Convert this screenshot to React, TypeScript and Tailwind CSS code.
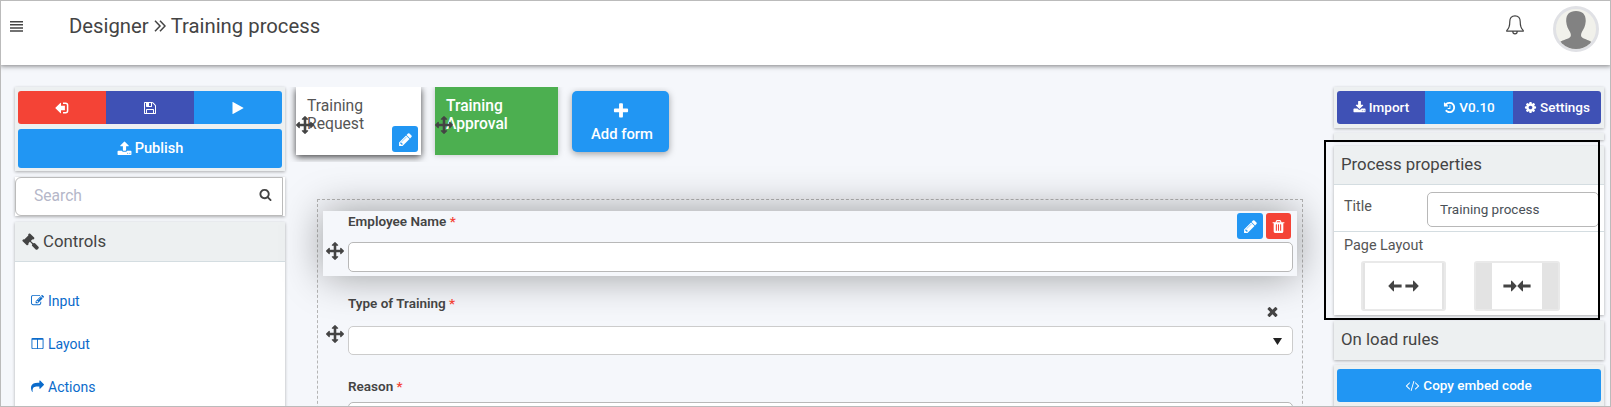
import React from "react";

const P = {
  move: "M1792 896q0 26-19 45l-256 256q-19 19-45 19t-45-19-19-45v-128h-384v384h128q26 0 45 19t19 45-19 45l-256 256q-19 19-45 19t-45-19l-256-256q-19-19-19-45t19-45 45-19h128v-384h-384v128q0 26-19 45t-45 19-45-19l-256-256q-19-19-19-45t19-45l256-256q19-19 45-19t45 19 19 45v128h384v-384h-128q-26 0-45-19t-19-45 19-45l256-256q19-19 45-19t45 19l256 256q19 19 19 45t-19 45-45 19h-128v384h384v-128q0-26 19-45t45-19 45 19l256 256q19 19 19 45z",
  search: "M1216 832q0-185-131.500-316.500t-316.500-131.500-316.500 131.500-131.500 316.500 131.500 316.500 316.500 131.500 316.500-131.500 131.500-316.500zm512 832q0 52-38 90t-90 38q-54 0-90-38l-343-342q-179 124-399 124-143 0-273.500-55.500t-225-150-150-225-55.500-273.500 55.500-273.500 150-225 225-150 273.500-55.500 273.500 55.500 225 150 150 225 55.500 273.500q0 220-124 399l343 343q37 37 37 90z",
  pencil: "M491 1536l91-91-235-235-91 91v107h128v128h107zm523-928q0-22-22-22-10 0-17 7l-542 542q-7 7-7 17 0 22 22 22 10 0 17-7l542-542q7-7 7-17zm-54-192l416 416-832 832h-416v-416zm683 96q0 53-37 90l-166 166-416-416 166-165q36-38 90-38 53 0 91 38l235 234q37 39 37 91z",
  edit: "M888 1184l116-116-152-152-116 116v56h96v96h56zm440-720q-16-16-33 1l-350 350q-17 17-1 33t33-1l350-350q17-17 1-33zm80 594v190q0 119-84.500 203.500t-203.500 84.500h-832q-119 0-203.500-84.500t-84.500-203.500v-832q0-119 84.500-203.500t203.500-84.500h832q63 0 117 25 15 7 18 23 3 17-9 29l-49 49q-14 14-32 8-23-6-45-6h-832q-66 0-113 47t-47 113v832q0 66 47 113t113 47h832q66 0 113-47t47-113v-126q0-13 9-22l64-64q15-15 35-7t20 29zm-96-738l288 288-672 672h-288v-288zm444 132l-92 92-288-288 92-92q28-28 68-28t68 28l152 152q28 28 28 68t-28 68z",
  trash: "M704 1376v-704q0-14-9-23t-23-9h-64q-14 0-23 9t-9 23v704q0 14 9 23t23 9h64q14 0 23-9t9-23zm256 0v-704q0-14-9-23t-23-9h-64q-14 0-23 9t-9 23v704q0 14 9 23t23 9h64q14 0 23-9t9-23zm256 0v-704q0-14-9-23t-23-9h-64q-14 0-23 9t-9 23v704q0 14 9 23t23 9h64q14 0 23-9t9-23zm-544-992h448l-48-117q-7-9-17-11h-317q-10 2-17 11zm928 32v64q0 14-9 23t-23 9h-96v948q0 83-47 143.500t-113 60.500h-832q-66 0-113-58.500t-47-141.500v-952h-96q-14 0-23-9t-9-23v-64q0-14 9-23t23-9h309l70-167q15-37 54-63t79-26h320q40 0 79 26t54 63l70 167h309q14 0 23 9t9 23z",
  times: "M1490 1322q0 40-28 68l-136 136q-28 28-68 28t-68-28l-294-294-294 294q-28 28-68 28t-68-28l-136-136q-28-28-28-68t28-68l294-294-294-294q-28-28-28-68t28-68l136-136q28-28 68-28t68 28l294 294 294-294q28-28 68-28t68 28l136 136q28 28 28 68t-28 68l-294 294 294 294q28 28 28 68z",
  plus: "M1600 736v192q0 40-28 68t-68 28h-416v416q0 40-28 68t-68 28h-192q-40 0-68-28t-28-68v-416h-416q-40 0-68-28t-28-68v-192q0-40 28-68t68-28h416v-416q0-40 28-68t68-28h192q40 0 68 28t28 68v416h416q40 0 68 28t28 68z",
  share: "M1792 640q0 26-19 45l-512 512q-19 19-45 19t-45-19-19-45v-256h-224q-98 0-175.500 6t-154 21.500-133 42.500-105.500 69.500-80 101-48.500 138.500-17.500 181q0 55 5 123 0 6 2.500 23.500t2.500 26.500q0 15-8.500 25t-23.500 10q-16 0-28-17-7-9-13-22t-13.500-30-10.500-24q-127-285-127-451 0-199 53-333 162-403 875-403h224v-256q0-26 19-45t45-19 45 19l512 512q19 19 19 45z",
  code: "M553 1399l-50 50q-10 10-23 10t-23-10l-466-466q-10-10-10-23t10-23l466-466q10-10 23-10t23 10l50 50q10 10 10 23t-10 23l-393 393 393 393q10 10 10 23t-10 23zm591-1067l-373 1291q-4 13-15.500 19.500t-23.500 2.500l-62-17q-13-4-19.500-15.500t-2.500-24.500l373-1291q4-13 15.500-19.500t23.500-2.500l62 17q13 4 19.500 15.500t2.500 24.500zm657 651l-466 466q-10 10-23 10t-23-10l-50-50q-10-10-10-23t10-23l393-393-393-393q-10-10-10-23t10-23l50-50q10-10 23-10t23 10l466 466q10 10 10 23t-10 23z",
  cog: "M1152 896q0-106-75-181t-181-75-181 75-75 181 75 181 181 75 181-75 75-181zm512-109v222q0 12-8 23t-20 13l-185 28q-19 54-39 91 35 50 107 138 10 12 10 25t-9 23q-27 37-99 108t-94 71q-12 0-26-9l-138-108q-44 23-91 38-16 136-29 186-7 28-36 28h-222q-14 0-24.500-8.500t-11.500-21.500l-28-184q-49-16-90-37l-141 107q-10 9-25 9-14 0-25-11-126-114-165-168-7-10-7-23 0-12 8-23 15-21 51-66.500t54-70.500q-27-50-41-99l-183-27q-13-2-21-12.500t-8-23.500v-222q0-12 8-23t19-13l186-28q14-46 39-92-40-57-107-138-10-12-10-24 0-10 9-23 26-36 98.500-107.500t94.500-71.500q13 0 26 10l138 107q44-23 91-38 16-136 29-186 7-28 36-28h222q14 0 24.500 8.500t11.500 21.500l28 184q49 16 90 37l142-107q9-9 24-9 13 0 25 10 129 119 165 170 7 8 7 22 0 12-8 23-15 21-51 66.500t-54 70.500q26 50 41 98l183 28q13 2 21 12.500t8 23.500z",
  history: "M1664 896q0 156-61 298t-164 245-245 164-298 61q-172 0-327-72.500t-264-204.500q-7-10-6.500-22.500t8.500-20.500l137-138q10-9 25-9 16 2 23 12 73 95 179 147t225 52q104 0 198.500-40.500t163.500-109.500 109.500-163.500 40.500-198.500-40.500-198.500-109.500-163.500-163.500-109.500-198.500-40.500q-98 0-188 35.500t-160 101.500l137 138q31 30 14 69-17 40-59 40h-448q-26 0-45-19t-19-45v-448q0-42 40-59 39-17 69 14l130 129q107-101 244.500-156.500t284.500-55.500q156 0 298 61t245 164 164 245 61 298zm-640-288v448q0 14-9 23t-23 9h-320q-14 0-23-9t-9-23v-64q0-14 9-23t23-9h224v-352q0-14 9-23t23-9h64q14 0 23 9t9 23z",
  upload: "M1344 1472q0-26-19-45t-45-19-45 19-19 45 19 45 45 19 45-19 19-45zm256 0q0-26-19-45t-45-19-45 19-19 45 19 45 45 19 45-19 19-45zm128-224v320q0 40-28 68t-68 28h-1472q-40 0-68-28t-28-68v-320q0-40 28-68t68-28h427q21 56 70.500 92t110.500 36h256q61 0 110.500-36t70.500-92h427q40 0 68 28t28 68zm-325-648q-17 40-59 40h-256v448q0 26-19 45t-45 19h-256q-26 0-45-19t-19-45v-448h-256q-42 0-59-40-17-39 14-69l448-448q18-19 45-19t45 19l448 448q31 30 14 69z",
  download: "M1344 1344q0-26-19-45t-45-19-45 19-19 45 19 45 45 19 45-19 19-45zm256 0q0-26-19-45t-45-19-45 19-19 45 19 45 45 19 45-19 19-45zm128-224v320q0 40-28 68t-68 28h-1472q-40 0-68-28t-28-68v-320q0-40 28-68t68-28h465l135 136q58 56 136 56t136-56l136-136h464q40 0 68 28t28 68zm-325-569q17 41-14 70l-448 448q-18 19-45 19t-45-19l-448-448q-31-29-14-70 17-39 59-39h256v-448q0-26 19-45t45-19h256q26 0 45 19t19 45v448h256q42 0 59 39z",
  save: "M512 1536h768v-384h-768v384zm896 0h128v-896q0-14-10-38.500t-20-34.500l-281-281q-10-10-34-20t-39-10v416q0 40-28 68t-68 28h-576q-40 0-68-28t-28-68v-416h-128v1280h128v-416q0-40 28-68t68-28h832q40 0 68 28t28 68v416zm-384-928v-320q0-13-9.500-22.500t-22.500-9.500h-192q-13 0-22.500 9.500t-9.500 22.500v320q0 13 9.500 22.500t22.500 9.500h192q13 0 22.500-9.500t9.500-22.500zm640 32v928q0 40-28 68t-68 28h-1344q-40 0-68-28t-28-68v-1344q0-40 28-68t68-28h928q40 0 88 20t76 48l280 280q28 28 48 76t20 88z",
  columns: "M224 1536h608v-1152h-640v1120q0 13 9.500 22.500t22.500 9.500zm1376-32v-1120h-640v1152h608q13 0 22.500-9.500t9.500-22.500zm128-1216v1216q0 66-47 113t-113 47h-1344q-66 0-113-47t-47-113v-1216q0-66 47-113t113-47h1344q66 0 113 47t47 113z",
  play: "M1576 927l-1328 738q-23 13-39.500 3t-16.500-36v-1472q0-26 16.500-36t39.500 3l1328 738q23 13 23 31t-23 31z",
  gavel: "M1771 1536q0 53-37 90l-107 108q-39 37-91 37-53 0-90-37l-363-364q-38-36-38-90 0-53 43-96l-256-256-126 126q-14 14-34 14t-34-14q2 2 12.500 12t12.500 13 10 11.500 10 13.500 6 13.500 5.500 16.500 1.500 18q0 38-28 68-3 3-16.500 18t-19 20.500-18.500 16.500-22 15.500-22 9-26 4.500q-40 0-68-28l-408-408q-28-28-28-68 0-13 4.500-26t9-22 15.500-22 16.500-18.500 20.500-19 18-16.500q30-28 68-28 10 0 18 1.500t16.500 5.500 13.500 6 13.500 10 11.500 10 13 12.500 12 12.500q-14-14-14-34t14-34l348-348q14-14 34-14t34 14q-2-2-12.500-12t-12.500-13-10-11.500-10-13.500-6-13.500-5.500-16.500-1.500-18q0-38 28-68 3-3 16.500-18t19-20.500 18.500-16.500 22-15.500 22-9 26-4.500q40 0 68 28l408 408q28 28 28 68 0 13-4.500 26t-9 22-15.500 22-16.500 18.500-20.500 19-18 16.500q-30 28-68 28-10 0-18-1.500t-16.500-5.500-13.500-6-13.500-10-11.500-10-13-12.500-12-12.500q14 14 14 34t-14 34l-126 126 256 256q43-43 96-43 52 0 91 37l363 363q37 39 37 91z",
  exit: "M704 1440q0 4 1 20t.5 26.500-3 23.500-10 19.500-20.500 6.500h-320q-119 0-203.500-84.500t-84.500-203.500v-704q0-119 84.500-203.500t203.500-84.500h320q13 0 22.500 9.500t9.500 22.500q0 4 1 20t.5 26.500-3 23.500-10 19.500-20.500 6.500h-320q-66 0-113 47t-47 113v704q0 66 47 113t113 47h312l11.500 1 11.500 3 8 5.500 7 9 2 13.500zm928-544q0 26-19 45l-544 544q-19 19-45 19t-45-19-19-45v-288h-448q-26 0-45-19t-19-45v-384q0-26 19-45t45-19h448v-288q0-26 19-45t45-19 45 19l544 544q19 19 19 45z",
};

function Icon({ name, className = "" }: { name: keyof typeof P; className?: string }) {
  return (
    <svg viewBox="0 0 1792 1792" fill="currentColor" className={`shrink-0 overflow-visible ${className}`}>
      <path d={P[name]} />
    </svg>
  );
}

function ExitIcon() {
  return (
    <svg viewBox="0 0 14 12" className="h-3 w-3.5" fill="none">
      <path d="M8 1.200h2.600a2 2 0 0 1 2 2v5.600a2 2 0 0 1-2 2H8" stroke="currentColor" strokeWidth="1.500" />
      <path d="M.2 6 5.300 1q.7-.6.700.3v2.500h3.900v4.400H6v2.500q0 .9-.7.3z" fill="currentColor" />
    </svg>
  );
}

function Arrow({ flip = false }: { flip?: boolean }) {
  return (
    <svg viewBox="0 0 14 12" fill="currentColor" className={`h-3 w-3.5 shrink-0 ${flip ? "-scale-x-100" : ""}`}>
      <path d="M.2 6 5 .9Q6 0 6 1.300v3.100h7.600v3.200H6v3.100q0 1.300-1 .4z" />
    </svg>
  );
}

const panel = "shadow-[0_1px_3px_rgba(0,0,0,0.3)]";

function Header() {
  return (
    <header className="relative z-10 flex h-[65px] shrink-0 bg-white shadow-[0_1px_5px_rgba(0,0,0,0.5)]">
      <svg viewBox="0 0 13 11" className="mt-[21px] ml-[10px] h-[11px] w-[13px]" fill="#444">
        <path d="M0 0h13v1.500H0zM0 3.100h13v1.500H0zM0 6.200h13v1.500H0zM0 9.300h13v1.500H0z" />
      </svg>
      <h1 className="mt-[10px] ml-[46px] flex h-8 items-center text-[20.3px] text-[#444]">
        Designer
        <svg viewBox="0 0 12 12" className="mx-[5px] h-3 w-3" fill="none" stroke="currentColor" strokeWidth="1.500">
          <path d="m1 .8 5 5.200-5 5.200M6 .8 11 6l-5 5.200" />
        </svg>
        Training process
      </h1>
      <svg viewBox="0 0 18 20" className="mt-[15px] ml-auto h-5 w-[18px]" fill="none" stroke="#444" strokeWidth="1.200">
        <path d="M9 .8C5.500.8 3.800 3.400 3.800 6.500c0 5-1 7.300-3 8.900v.8h16.400v-.8c-2-1.600-3-3.900-3-8.900C14.200 3.400 12.500.8 9 .8ZM6.800 16.500c0 3.200 4.400 3.200 4.400 0" />
      </svg>
      <svg viewBox="0 0 46 46" className="mt-[6px] mr-3 ml-[29px] h-[46px] w-[46px]">
        <clipPath id="avatar"><circle cx="23" cy="23" r="20" /></clipPath>
        <circle cx="23" cy="23" r="21.500" fill="#f1f1eb" stroke="#e0e1e5" strokeWidth="3" />
        <path clipPath="url(#avatar)" fill="#828282" d="M23 5c7 0 10 4 9.700 10.500-.3 4.500-1.800 7-3.800 10.500-1 1.700-1.400 4 .3 5.500 2.300 2 8 2.500 10.500 5.500V46h-34v-9c2.500-3 8.700-3.500 11-5.500 1.700-1.500 1.300-3.800.3-5.500-2-3.500-3.500-6-3.800-10.500C12.900 9 16 5 23 5Z" />
      </svg>
    </header>
  );
}

function LeftPanel() {
  const items = [
    ["edit", "Input"],
    ["columns", "Layout"],
    ["share", "Actions"],
  ] as const;
  return (
    <aside className="mt-[22px] ml-[15px] w-[270px] shrink-0">
      <div className={`bg-[#edf0f1] px-[3px] pt-1 pb-[3px] ${panel}`}>
        <div className="flex h-[33px] overflow-hidden rounded-[3px] text-white">
          <div className="flex flex-1 items-center justify-center bg-[#f44336]"><ExitIcon /></div>
          <div className="flex flex-1 items-center justify-center bg-[#3f51b5]"><Icon name="save" className="h-3.5 w-3.5" /></div>
          <div className="flex flex-1 items-center justify-center bg-[#2196f3]"><Icon name="play" className="h-3.5 w-3.5" /></div>
        </div>
        <div className="mt-[5px] flex h-[39px] items-center justify-center gap-[3px] rounded-[3px] bg-[#2196f3] text-[14.6px] font-medium text-white">
          <Icon name="upload" className="h-[15px] w-[15px]" />Publish
        </div>
      </div>
      <div className={`mt-1.5 bg-white pr-[2px] ${panel}`}>
        <div className="flex h-[39px] items-center rounded-l-md border border-[#bbb] bg-white pr-2.5 pl-[18px] text-[15.6px] text-[#b5b7c9]">
          <span className="pt-px">Search</span>
          <Icon name="search" className="mb-1 ml-auto h-[13px] w-[13px] text-[#444]" />
        </div>
      </div>
      <div className={`mt-[6px] h-[190px] bg-white ${panel}`}>
        <div className="flex h-10 items-center gap-1 border-b border-[#d4dde1] bg-[#edf0f1] pl-[7px] text-[16.8px] text-[#444]">
          <Icon name="gavel" className="h-[17px] w-[17px]" />Controls
        </div>
        <div className="flex flex-col pt-[17px] pl-4 text-sm text-[#0b6bcb]">
          {items.map(([icon, label]) => (
            <div key={label} className="flex h-[43.200px] items-center gap-1">
              <Icon name={icon} className="h-[13px] w-[13px]" />{label}
            </div>
          ))}
        </div>
      </div>
    </aside>
  );
}

function FormTabs() {
  return (
    <div className="-ml-1.5 flex h-[75px] overflow-hidden pl-1.5">
      <div className="relative ml-[6px] h-[68px] w-[125px] bg-white py-2.5 pl-[11px] text-[15.7px] leading-[18px] text-[#555] shadow-[0_2px_7px_rgba(0,0,0,0.75)]">
        Training<br />Request
        <Icon name="move" className="absolute top-[29px] left-0 h-[18px] w-[18px] text-[#444]" />
        <div className="absolute right-[3px] bottom-[3px] flex h-[26px] w-[26px] items-center justify-center rounded-[3px] bg-[#2196f3] text-white">
          <Icon name="pencil" className="h-[15px] w-[15px]" />
        </div>
      </div>
      <div className="relative ml-[14px] h-[68px] w-[123px] bg-[#4caf50] py-2.5 pl-[11px] text-[15.6px] leading-[18px] font-medium text-white shadow-[0_0_6px_rgba(0,0,0,0.22)]">
        Training<br />Approval
        <Icon name="move" className="absolute top-[29px] left-0 h-[18px] w-[18px] text-[#444]" />
      </div>
      <div className="mt-1 ml-[14px] flex h-[61px] w-[97px] flex-col items-center rounded-[5px] bg-[#2196f3] pt-[11px] text-[14.8px] font-medium text-white shadow-[0_2px_7px_rgba(0,0,0,0.35)]">
        <Icon name="plus" className="h-[18px] w-[18px]" />
        <span className="mt-[4px] ml-[3px] leading-[20px]">Add form</span>
      </div>
    </div>
  );
}

function Label({ children }: { children: React.ReactNode }) {
  return <div className="text-[13.5px] leading-4 font-semibold text-[#444]">{children} <span className="text-[#f44336]">*</span></div>;
}

function Canvas() {
  return (
    <div className="mt-[37px] ml-[27px] h-[220px] w-[986px] border border-b-0 border-dashed border-[#b5b5b5]">
      <div className="relative mt-[11px] ml-[5px] h-[65px] w-[974px] bg-[#f5f7fb] pl-[25px] shadow-[0_0_40px_rgba(0,0,0,0.38)]">
        <div className="flex h-[31px] pt-[2px]">
          <Label>Employee Name</Label>
          <div className="mr-[6px] ml-auto flex gap-[3px] text-white">
            <div className="flex h-[26px] w-[26px] items-center justify-center rounded-[3px] bg-[#2196f3]"><Icon name="pencil" className="h-[15px] w-[15px]" /></div>
            <div className="flex h-[26px] w-[25px] items-center justify-center rounded-[3px] bg-[#f44336]"><Icon name="trash" className="h-[15px] w-[15px]" /></div>
          </div>
        </div>
        <div className="h-[30px] w-[945px] rounded-[5px] border border-[#b8b8b8] bg-white" />
        <Icon name="move" className="absolute top-[31px] left-[3px] h-[18px] w-[18px] text-[#444]" />
      </div>
      <div className="relative ml-[5px] h-[83px] w-[974px] pt-[19px] pl-[25px]">
        <div className="flex h-[31px]">
          <Label>Type of Training</Label>
          <Icon name="times" className="mt-[9px] mr-[17px] ml-auto h-[15px] w-[15px] text-[#444]" />
        </div>
        <div className="flex h-[29px] w-[945px] items-center justify-end rounded-[5px] border border-[#ccc] bg-white pr-2.5">
          <svg viewBox="0 0 9 7" className="mt-px h-[7px] w-[9px]"><path d="M0 0h9L4.500 7z" fill="#222" /></svg>
        </div>
        <Icon name="move" className="absolute top-[49px] left-[3px] h-[18px] w-[18px] text-[#444]" />
      </div>
      <div className="pt-[19px] pl-[30px]">
        <Label>Reason</Label>
        <div className="mt-2 h-[30px] w-[945px] rounded-[5px] border border-[#b8b8b8] bg-white" />
      </div>
    </div>
  );
}

function RightPanel() {
  return (
    <aside className="relative mt-[22px] mr-[7px] ml-auto w-[270px] shrink-0 text-[#444]">
      <div className={`bg-[#edf0f1] py-1 pr-[3px] pl-[3px] ${panel}`}>
        <div className="flex h-[33px] overflow-hidden rounded-[3px] text-[13.5px] font-medium text-white">
          <div className="flex flex-1 items-center justify-center gap-[3px] bg-[#3f51b5]"><Icon name="download" className="h-[13px] w-[13px]" />Import</div>
          <div className="flex flex-1 items-center justify-center gap-[3px] bg-[#2196f3]"><Icon name="history" className="h-[13px] w-[13px]" />V0.10</div>
          <div className="flex flex-1 items-center justify-center gap-[3px] bg-[#3f51b5]"><Icon name="cog" className="h-[13px] w-[13px]" />Settings</div>
        </div>
      </div>
      <div className={`mt-[5px] h-[7px] bg-[#edf0f1] ${panel}`} />
      <div className={`mt-[6px] h-[169px] bg-white ${panel}`}>
        <div className="flex h-[39px] items-center border-b border-[#d4dde1] bg-[#edf0f1] pl-[7px] text-[16.8px]">Process properties</div>
        <div className="flex h-[47px] border-b border-[#d4dde1] pt-[7px] pl-2.5 text-[14.4px] text-[#555]">
          <span className="w-[83px] pt-[4px]">Title</span>
          <div className="flex h-[35px] w-[172px] items-center rounded-[5px] border border-[#b8b8b8] pl-3 text-[13.500px] text-[#495057]">Training process</div>
        </div>
        <div className="pt-[3px] pl-2.5 text-[14.4px] text-[#555]">
          <div className="h-[25px]">Page Layout</div>
          <div className="flex pt-px pl-[17px] text-[#444]">
            <div className="h-[50px] w-[85px] rounded-[3px] border-2 border-[#e9e9e9]">
              <div className="flex h-full items-center justify-center gap-[3px] border-x-2 border-[#e3e3e3]"><Arrow /><Arrow flip /></div>
            </div>
            <div className="ml-7 h-[50px] w-[86px] rounded-[3px] border-2 border-[#e9e9e9]">
              <div className="flex h-full items-center justify-center border-x-16 border-[#e3e3e3]"><Arrow flip /><Arrow /></div>
            </div>
          </div>
        </div>
      </div>
      <div className={`mt-[6px] flex h-[39px] items-center bg-[#edf0f1] pb-[2px] pl-[7px] text-[16.8px] ${panel}`}>On load rules</div>
      <div className={`mt-[5px] bg-[#edf0f1] px-[3px] pt-1 pb-3 ${panel}`}>
        <div className="flex h-[33px] items-center justify-center gap-1 rounded-[3px] bg-[#2196f3] text-[13.5px] font-medium text-white">
          <Icon name="code" className="h-[13px] w-[13px]" />Copy embed code
        </div>
      </div>
      <div className="absolute top-[53px] -left-[10px] h-[180px] w-[276px] border-2 border-black" />
    </aside>
  );
}

export default function App() {
  return (
    <div className="relative flex h-[407px] w-[1611px] flex-col overflow-hidden bg-[#f5f7fb] font-['Roboto',sans-serif]">
      <Header />
      <main className="flex min-h-0 flex-1">
        <LeftPanel />
        <section className="mt-[22px] ml-[5px] w-[1020px] shrink-0">
          <FormTabs />
          <Canvas />
        </section>
        <RightPanel />
      </main>
      <div className="pointer-events-none absolute inset-0 z-20 border border-[#bbb]" />
    </div>
  );
}
